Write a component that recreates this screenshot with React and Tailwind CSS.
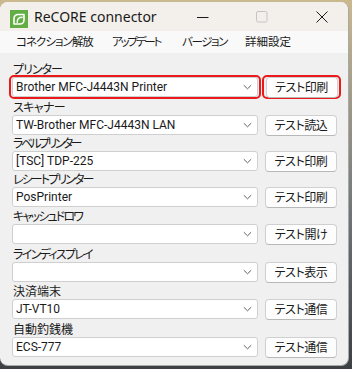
import React from "react";

const jp = "font-['Noto_Sans_CJK_JP',sans-serif] [font-feature-settings:'palt']";
const lat = "font-['Roboto','Noto_Sans_CJK_JP',sans-serif]";

function Chevron() {
  return (
    <svg width="9" height="6" viewBox="0 0 9 6" className="mr-[5px] shrink-0">
      <path d="M0.8 1.2 L4.5 4.8 L8.2 1.2" fill="none" stroke="#606060" strokeWidth="1" />
    </svg>
  );
}

function Combo({ value }) {
  return (
    <div className="w-[246px] h-[20px] bg-white border border-[#cfcfcf] rounded-[3px] flex items-center justify-between">
      <span className={`${lat} text-[12px] text-[#1a1a1a] pl-[3px] leading-none`}>{value}</span>
      <Chevron />
    </div>
  );
}

function Btn({ label }) {
  return (
    <div className={`w-[72px] h-[21px] bg-[#fdfdfd] border border-[#d0d0d0] border-b-[#b8b8b8] rounded-[4px] flex items-center justify-center ${jp} text-[12px] tracking-[-0.4px] text-[#1a1a1a] leading-none`}>
      {label}
    </div>
  );
}

const rows = [
  { label: "プリンター", tr: "tracking-[-1px]", value: "Brother MFC-J4443N Printer", btn: "テスト印刷", mt: "mt-[8px]", hl: true },
  { label: "スキャナー", tr: "tracking-[-0.6px]", value: "TW-Brother MFC-J4443N LAN", btn: "テスト読込", mt: "mt-[2px]" },
  { label: "ラベルプリンター", tr: "tracking-[-2.6px]", value: "[TSC] TDP-225", btn: "テスト印刷", mt: "mt-0" },
  { label: "レシートプリンター", tr: "tracking-[-1.9px]", value: "PosPrinter", btn: "テスト印刷", mt: "mt-0" },
  { label: "キャッシュドロワ", tr: "tracking-[-1.8px]", value: "", btn: "テスト開け", mt: "mt-[1px]" },
  { label: "ラインディスプレイ", tr: "tracking-[-1.7px]", value: "", btn: "テスト表示", mt: "mt-[2px]" },
  { label: "決済端末", tr: "tracking-[0px]", value: "JT-VT10", btn: "テスト通信", mt: "mt-[1px]" },
  { label: "自動釣銭機", tr: "tracking-[0px]", value: "ECS-777", btn: "テスト通信", mt: "mt-[2px]" },
];

function Row({ r }) {
  return (
    <div className={`${r.mt} flex flex-col`}>
      <div className={`h-[16px] pl-[13px] ${jp} ${r.tr} text-[12px] leading-[14px] pt-[1px] text-[#1a1a1a] whitespace-nowrap`}>{r.label}</div>
      <div className="h-[20px] flex items-center pl-[12px]">
        {r.hl ? (
          <>
            <div className="-ml-[3px] w-[252px] h-[24px] border-2 border-[#ea1a1a] rounded-[5px] flex items-center justify-center">
              <Combo value={r.value} />
            </div>
            <div className="ml-[1px] w-[79px] h-[24px] border-2 border-[#ea1a1a] rounded-[5px] flex items-center justify-center">
              <Btn label={r.btn} />
            </div>
          </>
        ) : (
          <>
            <Combo value={r.value} />
            <div className="ml-[7px]">
              <Btn label={r.btn} />
            </div>
          </>
        )}
      </div>
    </div>
  );
}

export default function App() {
  return (
    <div className="w-[352px] h-[369px] overflow-hidden bg-gradient-to-b from-[#cbb98e] via-[#7c7f80] to-[#3c3f44] pt-[2px]">
      <div className="w-[349px] h-[364px] bg-[#f0f0f0] rounded-[8px] overflow-hidden border-r border-b border-[#a8a8a8] flex flex-col">
        <div className="h-[29px] bg-[#f3f0eb] flex items-center relative">
          <svg width="18" height="18" viewBox="0 0 18 18" className="ml-[10px] mt-[5px] shrink-0">
            <rect width="18" height="18" fill="#62ad45" />
            <path d="M4 14 V8.5 a4 4 0 0 1 4-4 H14 V10 a4 4 0 0 1 -4 4 Z" fill="none" stroke="#fff" strokeWidth="1.6" strokeLinejoin="round" />
            <path d="M7.2 12.2 c0-3 2-5 5-5" fill="none" stroke="#fff" strokeWidth="1.4" strokeLinecap="round" />
          </svg>
          <span className="ml-[6px] mt-[1px] font-['Noto_Sans',sans-serif] text-[14px] text-[#1a1a1a] leading-none">ReCORE connector</span>
          <div className="ml-auto flex items-center mt-[1px]">
            <svg width="12" height="12" viewBox="0 0 12 12" className="mr-[47px]">
              <path d="M0 6.5 H11.5" stroke="#1a1a1a" strokeWidth="1" />
            </svg>
            <svg width="12" height="12" viewBox="0 0 12 12" className="mr-[48px]">
              <rect x="0.5" y="0.5" width="10.5" height="10.5" rx="1.5" fill="none" stroke="#c4c4c4" strokeWidth="1" />
            </svg>
            <svg width="12" height="12" viewBox="0 0 12 12" className="mr-[20px]">
              <path d="M0.5 0.5 L11.5 11.5 M11.5 0.5 L0.5 11.5" stroke="#1a1a1a" strokeWidth="1" />
            </svg>
          </div>
        </div>
        <div className={`h-[22px] bg-[#f9f9f9] flex items-center ${jp} text-[11.5px] text-[#1a1a1a] leading-none whitespace-nowrap`}>
          <span className="ml-[16px] w-[96px] tracking-[-1px]">コネクション解放</span>
          <span className="w-[70px] tracking-[-2.2px]">アップデート</span>
          <span className="w-[63px] tracking-[-1.4px]">バージョン</span>
          <span>詳細設定</span>
        </div>
        <div className="flex flex-col">
          {rows.map((r, i) => (
            <Row key={i} r={r} />
          ))}
        </div>
      </div>
    </div>
  );
}
